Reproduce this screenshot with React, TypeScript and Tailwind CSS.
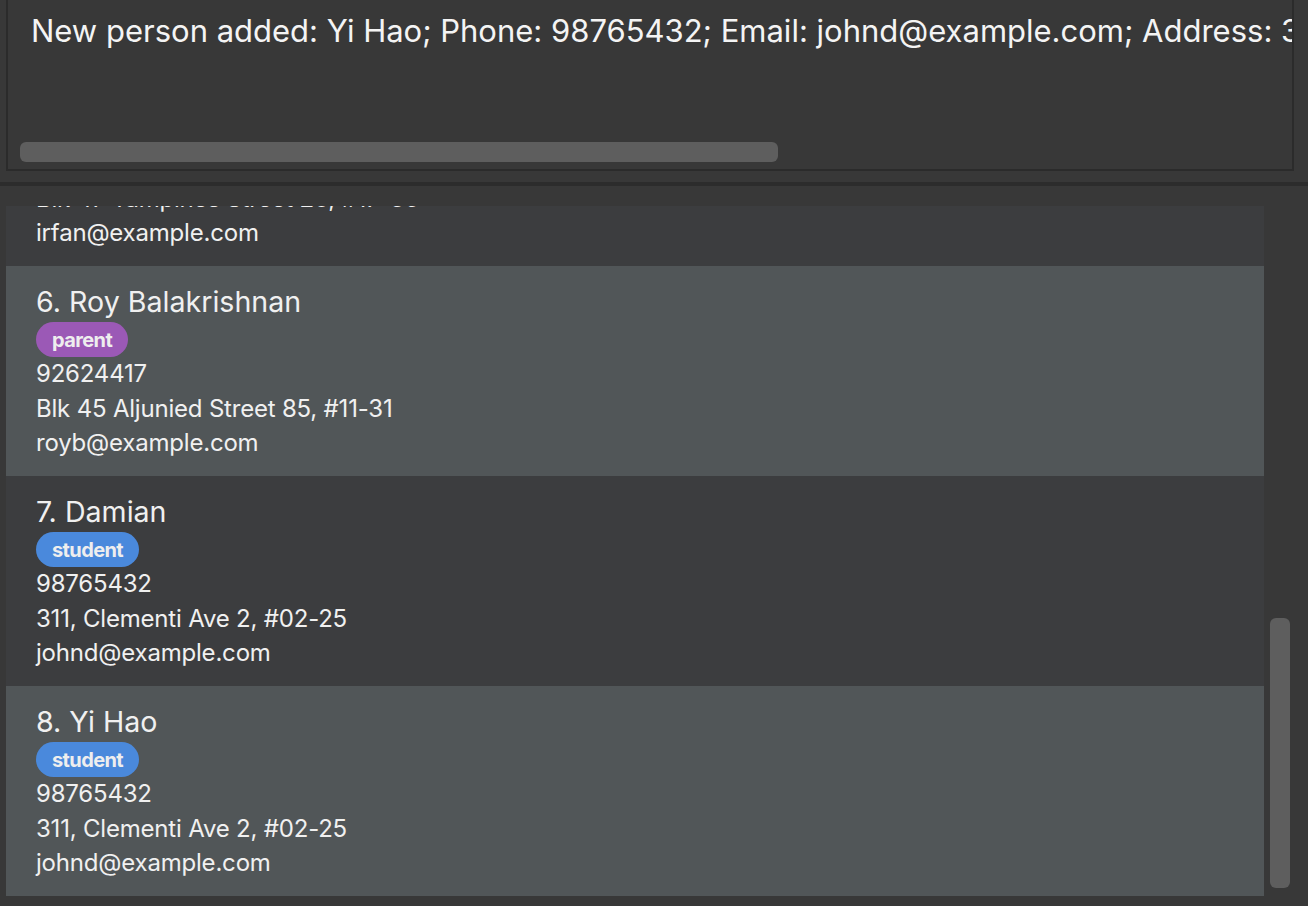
import React from "react";

type Person = {
  idx: number;
  name: string;
  tag: string;
  phone: string;
  address: string;
  email: string;
};

const people: Person[] = [
  { idx: 5, name: "Irfan Ibrahim", tag: "student", phone: "92492021", address: "Blk 47 Tampines Street 20, #17-35", email: "irfan@example.com" },
  { idx: 6, name: "Roy Balakrishnan", tag: "parent", phone: "92624417", address: "Blk 45 Aljunied Street 85, #11-31", email: "royb@example.com" },
  { idx: 7, name: "Damian", tag: "student", phone: "98765432", address: "311, Clementi Ave 2, #02-25", email: "johnd@example.com" },
  { idx: 8, name: "Yi Hao", tag: "student", phone: "98765432", address: "311, Clementi Ave 2, #02-25", email: "johnd@example.com" },
];

function Card({ p }: { p: Person }) {
  const light = p.idx % 2 === 0;
  return (
    <div
      className={`h-[210px] shrink-0 overflow-hidden pl-[30px] pt-[16px] text-[#f0f0f0] ${
        light ? "bg-[#515658]" : "bg-[#3c3d3f]"
      }`}
    >
      <div className="h-[40px] text-[28.6px] leading-[40px] whitespace-nowrap">
        {p.idx}. {p.name}
      </div>
      <div className="flex h-[35px] items-center">
        <span
          className={`flex h-[35px] items-center rounded-[18px] px-[16px] text-[20px] font-bold tracking-[-0.6px] text-[#eeeeee] ${
            p.tag === "parent" ? "bg-[#9b59b6]" : "bg-[#4a89dc]"
          }`}
        >
          {p.tag}
        </span>
      </div>
      <div className="text-[24px] leading-[34.5px] tracking-[-0.2px] whitespace-nowrap">{p.phone}</div>
      <div className="text-[24px] leading-[34.5px] tracking-[-0.2px] whitespace-nowrap">{p.address}</div>
      <div className="text-[24px] leading-[34.5px] tracking-[-0.2px] whitespace-nowrap">{p.email}</div>
    </div>
  );
}

export default function App() {
  return (
    <div
      className="flex h-[906px] w-[1308px] flex-col overflow-hidden bg-[#383838]"
      style={{ fontFamily: "Inter, 'Noto Sans', sans-serif" }}
    >
      <div className="pl-[6px] pr-[14px]">
        <div className="relative h-[171px] overflow-hidden border-x-2 border-b-2 border-[#2b2b2b] bg-[#383838]">
          <div className="mt-[11px] pl-[23px] text-[31px] leading-[40px] whitespace-nowrap text-[#f4f4f4]">
            New person added: Yi Hao; Phone: 98765432; Email: johnd@example.com; Address: 311, Clementi Ave 2, #02-25; Tags: [student]
          </div>
          <div className="absolute left-[12px] top-[142px] h-[20px] w-[758px] rounded-[6px] bg-[#5e5e5e]" />
        </div>
      </div>
      <div className="mt-[11px] h-[4px] bg-[#2c2c2c]" />
      <div className="flex min-h-0 flex-1 pt-[20px]">
        <div className="ml-[6px] flex w-[1258px] flex-col overflow-hidden">
          <div className="mt-[-150px] flex flex-col">
            {people.map((p) => (
              <Card key={p.idx} p={p} />
            ))}
          </div>
        </div>
        <div className="flex flex-1 flex-col pl-[6px] pt-[412px]">
          <div className="h-[270px] w-[20px] rounded-[6px] bg-[#5e5e5e]" />
        </div>
      </div>
    </div>
  );
}
